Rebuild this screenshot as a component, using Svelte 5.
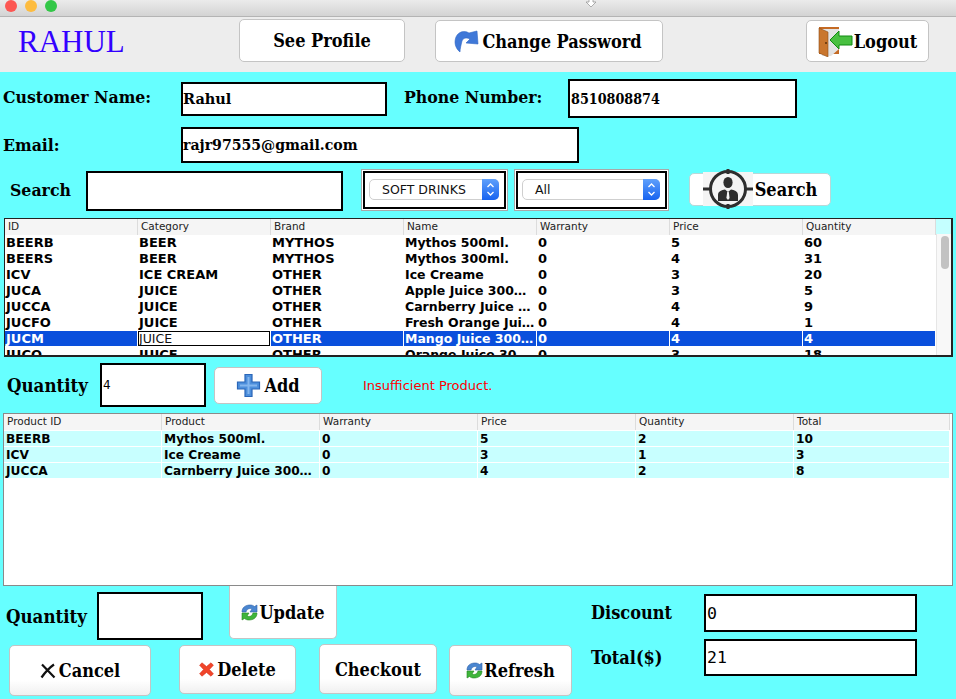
<script>
  // Billing window: customer fields, product search, stock table, cart table, totals.
  const stockCols = ['ID', 'Category', 'Brand', 'Name', 'Warranty', 'Price', 'Quantity'];
  const stock = [
    ['BEERB', 'BEER', 'MYTHOS', 'Mythos 500ml.', '0', '5', '60'],
    ['BEERS', 'BEER', 'MYTHOS', 'Mythos 300ml.', '0', '4', '31'],
    ['ICV', 'ICE CREAM', 'OTHER', 'Ice Creame', '0', '3', '20'],
    ['JUCA', 'JUICE', 'OTHER', 'Apple Juice 300…', '0', '3', '5'],
    ['JUCCA', 'JUICE', 'OTHER', 'Carnberry Juice …', '0', '4', '9'],
    ['JUCFO', 'JUICE', 'OTHER', 'Fresh Orange Jui…', '0', '4', '1'],
    ['JUCM', 'JUICE', 'OTHER', 'Mango Juice 300…', '0', '4', '4'],
    ['JUCO', 'JUICE', 'OTHER', 'Orange Juice 30…', '0', '3', '18'],
  ];
  const cartCols = ['Product ID', 'Product', 'Warranty', 'Price', 'Quantity', 'Total'];
  const cart = [
    ['BEERB', 'Mythos 500ml.', '0', '5', '2', '10'],
    ['ICV', 'Ice Creame', '0', '3', '1', '3'],
    ['JUCCA', 'Carnberry Juice 300…', '0', '4', '2', '8'],
  ];
  const selectedRow = 6;
</script>

{#snippet refreshIcon()}
  <svg class="ico" width="17" height="17" viewBox="0 0 17 17">
    <path d="M1 8 C1 3 5 1 9 1 C11 1 12.5 1.6 13.5 2.5 L16 1 V8 H9 L11 5 C9 4 6 4.5 5 8 Z" fill="#4a86d0" stroke="#2f62a8" stroke-width=".6" />
    <path d="M16 9 C16 14 12 16 8 16 C6 16 4.5 15.4 3.5 14.5 L1 16 V9 H8 L6 12 C8 13 11 12.5 12 9 Z" fill="#3fb53a" stroke="#23871f" stroke-width=".6" />
  </svg>
{/snippet}

{#snippet stepper()}
  <i class="stepper">
    <svg width="9" height="15" viewBox="0 0 9 15">
      <path d="M1.5 5 4.5 2 7.5 5M1.5 10 4.5 13 7.5 10" fill="none" stroke="#fff" stroke-width="1.3" />
    </svg>
  </i>
{/snippet}

<div class="titlebar">
  <span class="light red"></span>
  <span class="light yellow"></span>
  <span class="light green"></span>
  <svg class="doc" width="10" height="8" viewBox="0 0 10 8"><path d="M3 0h4v3h3L5 8 0 3h3z" fill="#fff" stroke="#999" stroke-width=".8" /></svg>
</div>

<header class="top">
  <h1>RAHUL</h1>
  <button class="btn profile">See Profile</button>
  <button class="btn password">
    <svg class="ico" width="27" height="26" viewBox="0 0 27 26">
      <path d="M6 24 C1 20 0 14 2 9 C4 4 10 2 15 5 L23 3 L24 16 L12 15 L16 11 C12 9 9 10 8 13 C7 17 6 21 6 24 Z" fill="#3f78d8" stroke="#2f66c4" stroke-width=".6" />
    </svg>
    Change Password
  </button>
  <button class="btn logout">
    <svg class="ico" width="35" height="32" viewBox="0 0 35 32">
      <path d="M1 2 H21 V29 H1 Z" fill="#c46a24" />
      <path d="M4 4 H21 V24 L13 31 H4 Z" fill="#e3e3e3" />
      <path d="M1 3 L10 7 V32 L1 28 Z" fill="#c9762e" stroke="#8f4f17" stroke-width=".6" />
      <circle cx="8" cy="18" r="1" fill="#5a3008" />
      <path d="M12 15 L21 6 V11 H34 V20 H21 V24 Z" fill="#48c040" stroke="#118a10" stroke-width="1" />
    </svg>
    Logout
  </button>
</header>

<main class="form">
  <div class="row row-name">
    <span class="label name-label">Customer Name:</span>
    <input class="field name" value="Rahul" />
    <span class="label phone-label">Phone Number:</span>
    <input class="field phone" value="8510808874" />
  </div>

  <div class="row row-email">
    <span class="label name-label">Email:</span>
    <input class="field email" value="rajr97555@gmail.com" />
  </div>

  <div class="row row-search">
    <span class="label search-label">Search</span>
    <input class="field search" />
    <div class="combo-frame first">
      <div class="combo"><span>SOFT DRINKS</span>{@render stepper()}</div>
    </div>
    <div class="combo-frame second">
      <div class="combo"><span>All</span>{@render stepper()}</div>
    </div>
    <button class="btn search-btn">
      <svg class="ico target" width="50" height="40" viewBox="0 0 50 40">
        <rect x="0" y="3" width="50" height="34" fill="#f4f4f4" />
        <circle cx="25" cy="20" r="17.5" fill="none" stroke="#2e2e2e" stroke-width="3" />
        <path d="M0 20h8M42 20h8M25 0v5M25 35v5" stroke="#2e2e2e" stroke-width="3" />
        <ellipse cx="25" cy="13.5" rx="4.6" ry="5.6" fill="#2e2e2e" />
        <path d="M15 32 V26 C15 22 19 21 22 20.5 L25 23 L28 20.5 C31 21 35 22 35 26 V32 Z" fill="#2e2e2e" />
        <path d="M24.2 23 h1.6 l.8 6 -1.6 2 -1.6 -2z" fill="#f4f4f4" />
      </svg>
      Search
    </button>
  </div>

  <section class="grid stock">
    <table>
      <thead>
        <tr>{#each stockCols as col}<th>{col}</th>{/each}</tr>
      </thead>
      <tbody>
        {#each stock as row, r}
          <tr class:selected={r === selectedRow}>
            {#each row as cell, c}
              <td class:editing={r === selectedRow && c === 1}>{cell}</td>
            {/each}
          </tr>
        {/each}
      </tbody>
    </table>
    <div class="scrollbar"><div class="thumb"></div></div>
  </section>

  <div class="row row-qty">
    <span class="label qty-label">Quantity</span>
    <input class="field qty" value="4" />
    <button class="btn add">
      <svg class="ico" width="25" height="25" viewBox="0 0 25 25">
        <path d="M9 1.5h7v7.5h7.5v7H16v7.5H9V16H1.5V9H9z" fill="#4d8fdc" stroke="#2a66b8" stroke-width="1.2" />
        <path d="M4 12.5h17M12.5 4v17" stroke="#83b6ee" stroke-width="2" />
      </svg>
      Add
    </button>
    <span class="warning">Insufficient Product.</span>
  </div>

  <section class="grid cart">
    <table>
      <thead>
        <tr>{#each cartCols as col}<th>{col}</th>{/each}</tr>
      </thead>
      <tbody>
        {#each cart as row}
          <tr>{#each row as cell}<td>{cell}</td>{/each}</tr>
        {/each}
      </tbody>
    </table>
  </section>

  <div class="bottom">
    <div class="actions">
      <div class="row row-update">
        <span class="label qty-label2">Quantity</span>
        <input class="field qty2" />
        <button class="btn update">{@render refreshIcon()}Update</button>
      </div>
      <div class="row row-buttons">
        <button class="btn cancel">
          <svg class="ico" width="16" height="16" viewBox="0 0 16 16"><path d="M2 1.5 L14.5 14.5 M14 1.5 C9 5 5 9.5 1.5 14.5" fill="none" stroke="#111" stroke-width="2.2" /></svg>
          Cancel
        </button>
        <button class="btn delete">
          <svg class="ico" width="15" height="15" viewBox="0 0 15 15"><path d="M3 .8 7.5 4.6 12 .8 14.4 3.2 10.4 7.5 14.4 11.8 12 14.2 7.5 10.4 3 14.2.6 11.8 4.6 7.5.6 3.2z" fill="#f0452a" stroke="#d8301c" stroke-width=".6" /></svg>
          Delete
        </button>
        <button class="btn checkout">Checkout</button>
        <button class="btn refresh">{@render refreshIcon()}Refresh</button>
      </div>
    </div>
    <div class="totals">
      <span class="label big discount">Discount</span>
      <input class="field amount" value="0" />
      <span class="label big">Total($)</span>
      <input class="field amount" value="21" />
    </div>
  </div>
</main>

<style>
  :global(body) {
    margin: 0;
    background: #66ffff;
    overflow: hidden;
  }
  .titlebar {
    display: flex;
    align-items: flex-start;
    gap: 8px;
    position: relative;
    height: 17px;
    padding-left: 5px;
    box-sizing: border-box;
    background: linear-gradient(#ebebeb, #d3d3d3);
    border-bottom: 1px solid #b4b4b4;
  }
  .light {
    width: 12px;
    height: 12px;
    border-radius: 50%;
  }
  .red { background: #fc5753; }
  .yellow { background: #fdbc40; }
  .green { background: #33c748; }
  .doc {
    position: absolute;
    left: 586px;
    top: -1px;
  }
  .top {
    display: flex;
    align-items: flex-start;
    height: 55px;
    background: #ededed;
  }
  h1 {
    width: 221px;
    margin: 5px 0 0;
    padding-left: 18px;
    box-sizing: border-box;
    color: #3300ff;
    font: 400 31px/40px "Liberation Serif", serif;
  }
  .btn {
    display: flex;
    align-items: center;
    justify-content: center;
    gap: 1px;
    padding: 0;
    box-sizing: border-box;
    background: #fff;
    border: 1px solid #c4c4c4;
    border-radius: 5px;
    color: #000;
    font: 700 18px "DejaVu Serif Condensed", "DejaVu Serif", serif;
    font-stretch: condensed;
    white-space: nowrap;
  }
  .ico { flex: none; }
  .profile { width: 166px; height: 43px; margin: 2px 0 0 18px; }
  .password { width: 228px; height: 42px; margin: 3px 0 0 30px; padding-right: 2px; }
  .logout { width: 123px; height: 42px; margin: 3px 0 0 143px; }

  .form {
    display: flex;
    flex-direction: column;
    height: 627px;
    background: #66ffff;
  }
  .row {
    display: flex;
    align-items: center;
  }
  .label {
    color: #000;
    font: 700 17.5px "DejaVu Serif Condensed", "DejaVu Serif", serif;
    font-stretch: condensed;
    white-space: nowrap;
  }
  .big { font-size: 18px; }
  .discount { margin-top: -2px; }
  .field {
    box-sizing: border-box;
    padding: 0;
    background: #fff;
    border: 2px solid #000;
    border-radius: 0;
    color: #000;
    font: 700 14.5px "DejaVu Serif", serif;
    outline: none;
  }
  .row-name { height: 39px; margin-top: 7px; }
  .row-name .label { margin-top: -3px; }
  .name-label { width: 178px; margin-left: 3px; }
  .name { width: 206px; height: 34px; }
  .phone-label { width: 164px; margin-left: 17px; }
  .phone {
    width: 229px;
    height: 39px;
    padding: 0 1px;
    font-family: "DejaVu Serif Condensed", "DejaVu Serif", serif;
    font-stretch: condensed;
    font-size: 14.2px;
  }
  .row-email { height: 36px; margin-top: 9px; }
  .email { width: 398px; height: 36px; font-size: 14.1px; }
  .row-search { height: 42px; margin-top: 6px; }
  .search-label { width: 76px; margin-left: 10px; }
  .search { width: 257px; height: 40px; margin-top: 2px; }
  .combo-frame {
    display: flex;
    align-items: center;
    box-sizing: border-box;
    height: 42px;
    padding: 0 8px 2px 7px;
    background: #fff;
    border: 1px solid #a8a8a8;
    box-shadow: inset 0 0 0 1px #fff, inset 0 0 0 3px #000;
  }
  .first { width: 147px; margin-left: 18px; }
  .second { width: 155px; margin-left: 6px; }
  .combo {
    display: flex;
    align-items: center;
    justify-content: space-between;
    flex: 1;
    height: 21px;
    padding-left: 12px;
    box-sizing: border-box;
    background: #fff;
    border: 1px solid #cfcfcf;
    border-radius: 5px;
    font: 12.5px "DejaVu Sans", sans-serif;
    color: #111;
  }
  .stepper {
    display: flex;
    align-items: center;
    justify-content: center;
    width: 17px;
    height: 21px;
    margin-right: -1px;
    background: linear-gradient(#5fa0fb, #1763f0);
    border-radius: 0 5px 5px 0;
  }
  .search-btn {
    width: 142px;
    height: 33px;
    margin: -2px 0 0 20px;
    border-color: #b8d8d8;
    gap: 2px;
  }

  .grid {
    position: relative;
    box-sizing: border-box;
    overflow: hidden;
    background: #fff;
  }
  table {
    border-collapse: separate;
    border-spacing: 0;
    table-layout: fixed;
  }
  th {
    height: 16px;
    padding: 0 0 2px 3px;
    box-sizing: border-box;
    background: #f5f5f5;
    border-right: 1px solid #dcdcdc;
    color: #222;
    font: 400 10.5px "DejaVu Sans", sans-serif;
    text-align: left;
    overflow: hidden;
    white-space: nowrap;
  }
  td {
    height: 16px;
    padding: 0 0 0 1px;
    box-sizing: border-box;
    color: #000;
    font: 700 13px "DejaVu Sans", sans-serif;
    white-space: nowrap;
    overflow: hidden;
  }
  .stock {
    width: 949px;
    height: 139px;
    margin: 7px 0 0 4px;
    border: 1px solid #222;
    border-width: 1px 2px 2px 1px;
  }
  .stock table { width: 931px; }
  .stock td { border-bottom: 1px solid #fff; }
  .stock td:nth-child(4) { font-size: 12.5px; }
  .selected td {
    background: #0a4fdc;
    color: #fff;
    border-right: 1px solid #fff;
  }
  .selected td.editing {
    background: #fff;
    color: #111;
    font-weight: 400;
    font-size: 12.5px;
    box-shadow: inset 0 0 0 1px #000;
  }
  .scrollbar {
    position: absolute;
    top: 0;
    right: 0;
    bottom: 0;
    width: 15px;
    background: #f8f8f8;
    border-left: 1px solid #e6e6e6;
    box-sizing: border-box;
  }
  .scrollbar::before {
    content: "";
    display: block;
    height: 15px;
    margin-left: -1px;
    background: #c4ffff;
  }
  .thumb {
    width: 8px;
    height: 33px;
    margin: 2px 0 0 4px;
    background: #c2c2c2;
    border-radius: 4px;
  }

  .row-qty { height: 44px; margin-top: 6px; }
  .qty-label { width: 93px; margin-left: 7px; font-size: 18.5px; }
  .qty {
    width: 106px;
    height: 44px;
    padding: 0 1px;
    font: 400 12px "DejaVu Sans", sans-serif;
  }
  .add { width: 108px; height: 37px; margin-left: 8px; gap: 3px; }
  .warning {
    margin-left: 41px;
    color: #ff0000;
    font: 400 13px "DejaVu Sans", sans-serif;
  }

  .cart {
    width: 950px;
    height: 173px;
    margin: 6px 0 0 3px;
    border: 1px solid #8a8a8a;
  }
  .cart table { width: 946px; }
  .cart th { width: 158px; }
  .cart th:last-child { width: 156px; }
  .cart td {
    padding-left: 2px;
    background: #c8ffff;
    border-right: 1px solid #fff;
    border-top: 1px solid #fff;
    font-size: 12.2px;
  }

  .bottom {
    display: flex;
    align-items: flex-start;
  }
  .actions {
    display: flex;
    flex-direction: column;
    width: 591px;
    flex: none;
  }
  .row-update { height: 54px; align-items: flex-start; }
  .qty-label2 { width: 91px; margin: 20px 0 0 6px; font-size: 18.5px; }
  .qty2 { width: 106px; height: 48px; margin-top: 6px; }
  .update {
    width: 108px;
    height: 53px;
    margin-left: 26px;
    border-top: none;
    border-radius: 0 0 5px 5px;
  }
  .row-buttons { height: 52px; margin-top: 5px; align-items: flex-start; }
  .row-buttons .btn { background: linear-gradient(#fff 70%, #f0f0f0); }
  .cancel { width: 142px; height: 51px; margin: 0 0 0 9px; gap: 3px; }
  .delete { width: 117px; height: 49px; margin-left: 28px; gap: 3px; }
  .checkout { width: 118px; height: 50px; margin: -1px 0 0 23px; }
  .refresh { width: 123px; height: 51px; margin-left: 12px; }
  .totals {
    display: grid;
    grid-template-columns: 113px 213px;
    grid-template-rows: 38px 37px;
    row-gap: 7px;
    align-items: center;
    margin-top: 8px;
  }
  .amount {
    width: 213px;
    height: 100%;
    padding: 0 1px;
    font: 400 16.5px "DejaVu Sans Mono", monospace;
  }
</style>
